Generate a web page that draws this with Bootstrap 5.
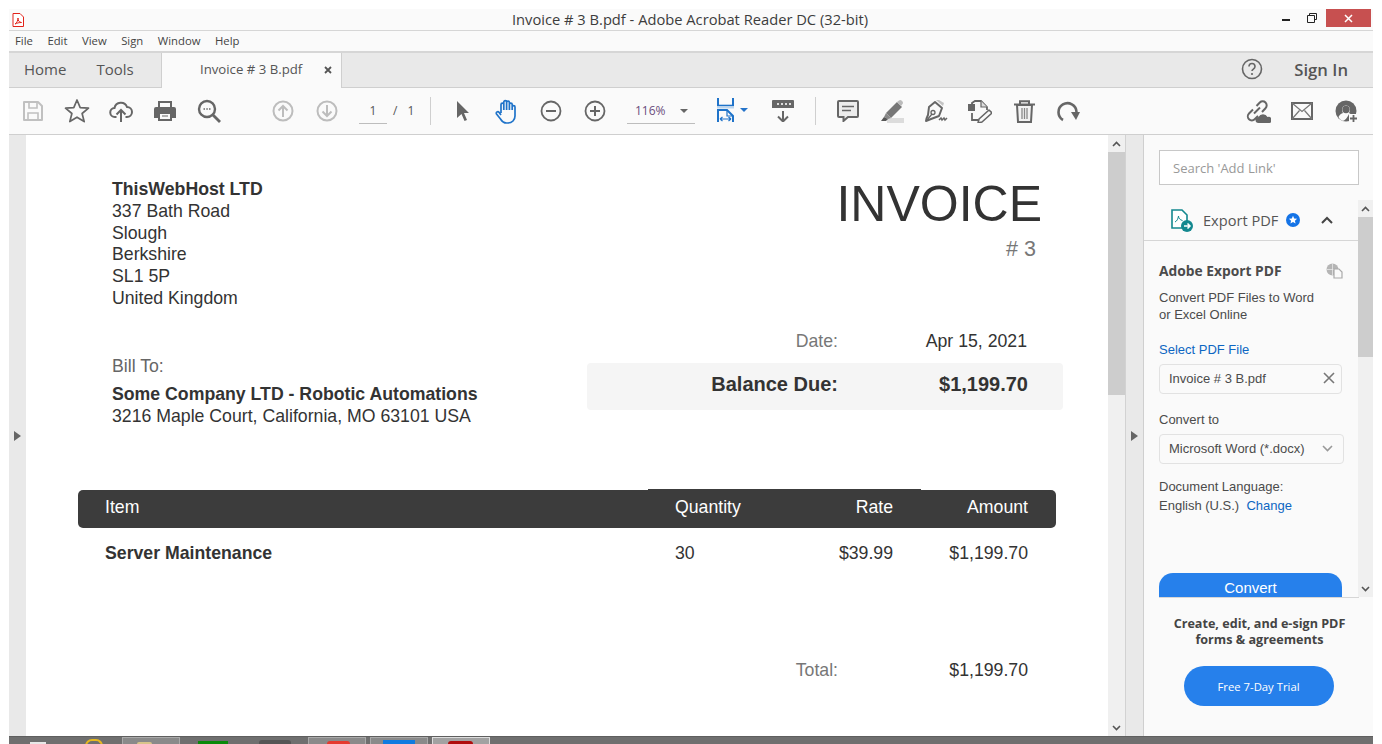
<!DOCTYPE html>
<html lang="en">
<head>
<meta charset="UTF-8" />
<meta name="viewport" content="width=device-width, initial-scale=1" />
<title>Invoice # 3 B.pdf - Adobe Acrobat Reader DC (32-bit)</title>
<link href="https://cdn.jsdelivr.net/npm/bootstrap@5.3.0/dist/css/bootstrap.min.css" rel="stylesheet" />
<style>
  html, body { height: 744px; overflow: hidden; background: #fff; }
  body { padding: 9px 9px 0; font-family: "Open Sans", "Noto Sans", sans-serif; color: #444; }
  svg { display: block; flex: none; }
  .app-window { height: 735px; width: 1364px; }

  .title-bar { height: 22px; background: #fafafa; border-bottom: 1px solid #d6d6d6; font-size: 14.7px; line-height: 20px; color: #3d3d3d; padding-left: 3px; }
  .title-text { flex: 1; text-align: center; padding-left: 74px; }
  .win-min { width: 8px; height: 2px; background: #222; margin: 10px 17px 0 0; }
  .win-max { margin: 4px 9px 0 0; }
  .win-close { width: 45px; height: 18px; background: #c75050; margin-right: 2px; }

  .menu-bar { height: 22px; background: #fafafa; border-bottom: 2px solid #d6d6d6; font-size: 11.3px; line-height: 20px; padding-left: 6px; gap: 14.500px; color: #444; }

  .tab-bar { height: 35px; background: #e9e9e9; border-bottom: 1px solid #cfcfcf; font-size: 15px; color: #555; }
  .tab-home { width: 152px; padding-left: 15px; gap: 30px; padding-bottom: 1px; }
  .tab-doc { width: 181px; height: 35px; background: #fafafa; border: 1px solid #cfcfcf; border-width: 0 1px; font-size: 13.2px; padding-left: 38px; padding-right: 9px; }
  .tab-end { padding-right: 25px; gap: 31px; padding-bottom: 1px; }
  .sign-in { font-weight: 600; font-size: 16.7px; }

  .tool-bar { height: 47px; background: #fafafa; border-bottom: 1px solid #cfcfcf; padding: 0 5px 0 2px; }
  .tool-slot { width: 44px; height: 46px; }
  .tool-gap-a { width: 30px; }
  .tool-gap-b { width: 10px; }
  .page-box { width: 81px; height: 46px; font-size: 12px; color: #555; }
  .page-num { width: 28px; margin-left: 10px; text-align: center; border-bottom: 1px solid #bdbdbd; height: 25px; line-height: 24px; }
  .page-of { margin-left: 6px; word-spacing: 7px; height: 25px; line-height: 24px; }
  .tool-sep { width: 1px; height: 28px; background: #cfcfcf; flex: none; }
  .zoom-box { width: 68px; height: 25px; border-bottom: 1px solid #bdbdbd; font-size: 12px; line-height: 24px; padding-left: 8px; padding-right: 7px; color: #6a4d7c; }
  .drop-arrow { width: 0; height: 0; border-left: 4px solid transparent; border-right: 4px solid transparent; border-top: 4px solid #666; }
  .fit-box { width: 66px; gap: 6px; padding-left: 22px; padding-bottom: 3px; }
  .drop-blue { border-top-color: #2473c9; }
  .tool-push { flex: 1; }

  .work-area { height: 601px; }
  .side-strip { width: 17px; background: #e9e9e9; }
  .strip-arrow { width: 0; height: 0; border-top: 5px solid transparent; border-bottom: 5px solid transparent; border-left: 7px solid #666; }
  .pdf-page { width: 1082px; background: #fff; overflow: hidden; font-family: "Liberation Sans", Arial, sans-serif; color: #333; font-size: 17.7px; line-height: 21.8px; padding: 44px 0 0 52px; }
  .vert-bar { width: 17px; background: #f0f0f0; }
  .bar-arrow { height: 17px; }
  .bar-thumb { height: 243px; background: #cdcdcd; }
  .mid-strip { width: 19px; background: #e9e9e9; border-left: 1px solid #d2d2d2; border-right: 1px solid #cfcfcf; }

  .bill-from { padding-left: 34px; width: 700px; }
  .inv-head { width: 263px; text-align: right; }
  .inv-word { font-size: 50px; line-height: 50px; color: #333; }
  .inv-num { font-size: 21.5px; line-height: 24px; color: #777; padding-right: 6px; margin-top: 8px; }
  .head-row { width: 964px; height: 142px; }
  .bill-row { width: 985px; height: 169px; }
  .bill-to { width: 509px; padding: 35px 0 0 34px; }
  .bill-label { color: #666; margin-bottom: 6px; }
  .sums { width: 476px; }
  .date-row { height: 42px; padding-top: 10px; }
  .sum-label { width: 251px; text-align: right; color: #777; }
  .sum-value { width: 189px; text-align: right; }
  .balance-band { width: 476px; height: 47px; background: #f5f5f5; border-radius: 4px; font-weight: 700; font-size: 20px; line-height: 43px; }
  .balance-band .sum-label { color: #333; }
  .balance-band .sum-value { width: 190px; }

  .item-head { width: 978px; height: 38px; background: #3c3c3c; border-radius: 5px; color: #fff; position: relative; line-height: 35px; }
  .item-head::before { content: ""; position: absolute; left: 570px; width: 273px; top: -1px; height: 1px; background: #3c3c3c; }
  .col-item { width: 597px; padding-left: 27px; }
  .col-qty { width: 130px; }
  .col-rate { width: 88px; text-align: right; }
  .col-amt { width: 135px; text-align: right; }
  .item-row { width: 978px; line-height: 22px; padding-top: 14px; }
  .total-row { width: 950px; margin-top: 96px; }
  .total-row .sum-value { width: 190px; }
  .total-label { width: 760px; text-align: right; color: #777; }

  .right-panel { width: 229px; background: #fafafa; font-family: "Liberation Sans", Arial, sans-serif; font-size: 13px; line-height: 18px; color: #4b4b4b; }
  .find-box { width: 200px; height: 35px; margin: 15px 0 0 15px; background: #fff; border: 1px solid #c8c8c8; font-family: "Open Sans", sans-serif; font-size: 13px; line-height: 34px; padding-left: 13px; color: #999; }
  .panel-scroll { height: 397px; margin-top: 15px; }
  .panel-body { width: 214px; overflow: hidden; }
  .panel-bar { width: 15px; background: #f0f0f0; }
  .panel-arrow { height: 17px; }
  .panel-thumb { height: 140px; background: #cdcdcd; }
  .panel-head { height: 41px; border-bottom: 1px solid #d6d6d6; padding-left: 27px; font-family: "Open Sans", sans-serif; font-size: 14.6px; color: #555; }
  .head-label { margin-left: 9px; }
  .head-chev { margin-left: 21px; }
  .panel-inner { padding: 19px 15px 0; }
  .export-title { font-weight: 700; font-size: 13.8px; font-family: "Open Sans", sans-serif; line-height: 21px; }
  .export-desc { margin-top: 8px; line-height: 17px; }
  .blue-link { color: #0d66c2; text-decoration: none; }
  .select-label { margin-top: 18px; display: block; }
  .file-field, .format-field { height: 30px; background: #fafafa; border: 1px solid #e2e2e2; border-radius: 4px; padding: 0 6px 2px 9px; line-height: 27px; }
  .file-field { width: 183px; margin-top: 5px; }
  .format-field { width: 185px; margin-top: 5px; }
  .convert-label { margin-top: 17px; }
  .lang-block { margin-top: 13px; line-height: 19px; }
  .convert-btn { width: 183px; height: 24px; margin-top: 58px; padding: 0; border: 0; border-radius: 14px 14px 0 0; background: #2680eb; color: #fff; font-size: 15px; line-height: 30px; display: block; overflow: hidden; }
  .promo-box { padding: 18px 15px 0; width: 229px; }
  .promo-line { border-top: 1px solid #d6d6d6; margin: 0 14px 0 15px; }
  .promo-text { font-family: "Open Sans", sans-serif; font-weight: 700; font-size: 12.6px; line-height: 15.500px; text-align: center; color: #444; padding-left: 2px; white-space: nowrap; }
  .trial-btn { width: 150px; height: 40px; margin: 19px auto 0; padding: 0; border: 0; border-radius: 20px; background: #2680eb; color: #fff; font-family: "Open Sans", sans-serif; font-size: 11.3px; line-height: 39px; display: block; }

  .task-bar { height: 8px; background: #6f6f6f; border-top: 1px solid #5f5f5f; overflow: hidden; }
  .task-on { width: 58px; height: 7px; flex: none; background: #8a8a8a; border: 1px solid #aaa; border-bottom: 0; }
  .task-lit { background: #a2a2a2; border-color: #ddd; }
  .task-mark { flex: none; border-radius: 3px 3px 0 0; }
  .mk-start { width: 16px; height: 2px; margin: 5px 0 0 21px; background: #e8e8e8; border-radius: 0; }
  .mk-ie { width: 18px; height: 7px; margin: 2px 0 0 39px; border: 2px solid #e6b820; border-bottom: 0; border-radius: 9px 9px 0 0; }
  .on-first { margin-left: 19px; }
  .on-gap { margin-left: 4px; }
  .mk-folder { width: 15px; height: 2px; margin: 4px 0 0 14px; background: #d8c48a; }
  .mk-green { width: 30px; height: 4px; margin: 4px 0 0 18px; background: #0a8a0a; border-radius: 0; }
  .mk-dark { width: 32px; height: 5px; margin: 3px 0 0 31px; background: #555; }
  .on-red { margin-left: 17px; }
  .mk-red { width: 23px; height: 3px; margin: 3px 0 0 18px; background: #e53a2f; border-radius: 12px 12px 0 0; }
  .mk-blue { width: 32px; height: 5px; margin: 2px 0 0 12px; background: #0f7be0; border-radius: 0; }
  .mk-crim { width: 25px; height: 3px; margin: 3px 0 0 15px; background: #b00d0d; border-radius: 6px 6px 0 0; }
</style>
</head>
<body>
<div class="app-window d-flex flex-column">

  <!-- title bar -->
  <div class="title-bar d-flex">
    <svg class="mt-1" width="12" height="14" viewBox="0 0 12 14"><path d="M1 .5h7l3.500 3.500v9.500H1z" fill="#fff" stroke="#e2231a"/><path d="M3 11c2-1 3-4 3-6 0 3 1 4 3.500 4.500C7 9.500 5 10 3 11z" fill="none" stroke="#e2231a"/></svg>
    <div class="title-text">Invoice # 3 B.pdf - Adobe Acrobat Reader DC (32-bit)</div>
    <div class="d-flex">
      <div class="win-min"></div>
      <svg class="win-max" width="10" height="10" viewBox="0 0 10 10"><path d="M2.500 2.500V.5h7v6H7.500M.5 2.500h7v7h-7z" fill="none" stroke="#222"/></svg>
      <div class="win-close d-flex align-items-center justify-content-center">
        <svg width="9" height="9" viewBox="0 0 9 9"><path d="M1 1l7 7M8 1L1 8" stroke="#fff" stroke-width="1.500"/></svg>
      </div>
    </div>
  </div>

  <!-- menu -->
  <div class="menu-bar d-flex">
    <span>File</span><span>Edit</span><span>View</span><span>Sign</span><span>Window</span><span>Help</span>
  </div>

  <!-- tabs -->
  <div class="tab-bar d-flex align-items-center">
    <div class="tab-home d-flex"><span>Home</span><span>Tools</span></div>
    <div class="tab-doc d-flex align-items-center justify-content-between">
      <span>Invoice # 3 B.pdf</span>
      <svg width="8" height="8" viewBox="0 0 8 8"><path d="M1 1l6 6M7 1L1 7" stroke="#555" stroke-width="1.800"/></svg>
    </div>
    <div class="tab-end ms-auto d-flex align-items-center">
      <svg width="22" height="22" viewBox="0 0 22 22"><circle cx="11" cy="11" r="9.500" fill="none" stroke="#666" stroke-width="1.600"/><path d="M8 8.500c0-4 6-4 6 0 0 2.500-3 2.500-3 4.500" fill="none" stroke="#666" stroke-width="1.600"/><circle cx="11" cy="16" r="1.100" fill="#666"/></svg>
      <span class="sign-in">Sign In</span>
    </div>
  </div>

  <!-- toolbar -->
  <div class="tool-bar d-flex align-items-center">
    <div class="tool-slot d-flex align-items-center justify-content-center">
      <svg width="22" height="22" viewBox="0 0 22 22"><path d="M2 2h14l4 4v14H2z" fill="none" stroke="#c0c0c0" stroke-width="2" stroke-linejoin="round"/><path d="M7 2v6h8V2M6 20v-7h10v7" fill="none" stroke="#c0c0c0" stroke-width="1.600"/></svg>
    </div>
    <div class="tool-slot d-flex align-items-center justify-content-center">
      <svg width="26" height="26" viewBox="0 0 26 26"><path d="M13 2l3.200 7.600 8.300.6-6.400 5.300 2.100 8.100L13 19.200l-7.200 4.400 2.100-8.100-6.400-5.300 8.300-.6z" fill="none" stroke="#666" stroke-width="1.700" stroke-linejoin="round"/></svg>
    </div>
    <div class="tool-slot d-flex align-items-center justify-content-center">
      <svg width="24" height="24" viewBox="0 0 24 24"><path d="M7.500 18H6a4.500 4.500 0 0 1-.5-9A6.500 6.500 0 0 1 18 8a5 5 0 0 1 0 10h-1.500" fill="none" stroke="#666" stroke-width="2"/><path d="M12 23V12M7.500 15.500L12 11l4.500 4.500" fill="none" stroke="#666" stroke-width="2"/></svg>
    </div>
    <div class="tool-slot d-flex align-items-center justify-content-center">
      <svg width="22" height="22" viewBox="0 0 22 22"><path d="M4 7V1h14v6h2a2 2 0 0 1 2 2v9h-4v3H4v-3H0V9a2 2 0 0 1 2-2z" fill="#666"/><path d="M6 3h10v4H6zM6 14h10v5H6z" fill="#fafafa"/><path d="M8 16h6" stroke="#666"/></svg>
    </div>
    <div class="tool-slot d-flex align-items-center justify-content-center">
      <svg width="24" height="24" viewBox="0 0 24 24"><circle cx="10" cy="10" r="8" fill="none" stroke="#666" stroke-width="2.400"/><path d="M16 16l7 7" stroke="#666" stroke-width="2.800"/><path d="M6.500 10h1.500M9.300 10h1.500M12 10h1.500" stroke="#666" stroke-width="1.500"/></svg>
    </div>
    <div class="tool-gap-a"></div>
    <div class="tool-slot d-flex align-items-center justify-content-center">
      <svg width="22" height="22" viewBox="0 0 22 22"><circle cx="11" cy="11" r="9.500" fill="none" stroke="#bdbdbd" stroke-width="2"/><path d="M11 17V6M6.500 10.500L11 6l4.500 4.500" fill="none" stroke="#bdbdbd" stroke-width="2"/></svg>
    </div>
    <div class="tool-slot d-flex align-items-center justify-content-center">
      <svg width="22" height="22" viewBox="0 0 22 22"><circle cx="11" cy="11" r="9.500" fill="none" stroke="#bdbdbd" stroke-width="2"/><path d="M11 5v11M6.500 11.500L11 16l4.500-4.500" fill="none" stroke="#bdbdbd" stroke-width="2"/></svg>
    </div>
    <div class="page-box d-flex align-items-center">
      <div class="page-num">1</div><div class="page-of">/ 1</div>
    </div>
    <div class="tool-sep"></div>
    <div class="tool-gap-b"></div>
    <div class="tool-slot d-flex align-items-center justify-content-center">
      <svg width="14" height="22" viewBox="0 0 14 22"><path d="M1 1l12 12H8l3 7-2.500 1-3-7L1 18z" fill="#666"/></svg>
    </div>
    <div class="tool-slot d-flex align-items-center justify-content-center">
      <svg width="24" height="25" viewBox="0 0 24 25"><path d="M6 14V5.500a1.400 1.400 0 0 1 2.800 0V11M8.800 11V3a1.400 1.400 0 0 1 2.800 0v8M11.600 11V3.500a1.400 1.400 0 0 1 2.800 0V11M14.400 11V5.500a1.400 1.400 0 0 1 2.800 0V11M17.200 11V8a1.400 1.400 0 0 1 2.800 0v9c0 4-3 7-7 7h-1.500c-3 0-4.500-1.500-6-4L1.500 15c-1-2 1.500-3 2.700-1.500L6 16" fill="none" stroke="#1f73c9" stroke-width="1.700" stroke-linejoin="round"/></svg>
    </div>
    <div class="tool-slot d-flex align-items-center justify-content-center">
      <svg width="22" height="22" viewBox="0 0 22 22"><circle cx="11" cy="11" r="9.500" fill="none" stroke="#666" stroke-width="1.800"/><path d="M6 11h10" stroke="#666" stroke-width="2"/></svg>
    </div>
    <div class="tool-slot d-flex align-items-center justify-content-center">
      <svg width="22" height="22" viewBox="0 0 22 22"><circle cx="11" cy="11" r="9.500" fill="none" stroke="#666" stroke-width="1.800"/><path d="M6 11h10M11 6v10" stroke="#666" stroke-width="2"/></svg>
    </div>
    <div class="tool-gap-b"></div>
    <div class="zoom-box d-flex align-items-center justify-content-between">
      <span>116%</span><span class="drop-arrow"></span>
    </div>
    <div class="fit-box d-flex align-items-center">
      <svg width="17" height="24" viewBox="0 0 17 24"><path d="M1 0v8M16 0v8" stroke="#1f73c9" stroke-width="2"/><path d="M0 7.500h17" stroke="#1f73c9" stroke-width="1.600"/><path d="M0 9h17v1.500H0z" fill="#bcd6ef"/><path d="M1 24V12h9l6 6v6" fill="none" stroke="#1f73c9" stroke-width="2"/><path d="M10 12v6h6" fill="none" stroke="#1f73c9" stroke-width="1.200"/><path d="M3 21h11M3 21l2.500-2M3 21l2.500 2M14 21l-2.500-2M14 21l-2.500 2" fill="none" stroke="#1f73c9" stroke-width="1.200"/></svg>
      <span class="drop-arrow drop-blue"></span>
    </div>
    <div class="tool-slot d-flex align-items-center justify-content-center">
      <svg width="22" height="22" viewBox="0 0 22 22"><path d="M1 0h20a1 1 0 0 1 1 1v7h-22V1a1 1 0 0 1 1-1z" fill="#666"/><path d="M5 3h2v2H5zM9 3h2v2H9zM13 3h2v2h-2zM17 3h2v2h-2z" fill="#ddd"/><path d="M11 11v10M6 16.500l5 5 5-5" fill="none" stroke="#666" stroke-width="2"/></svg>
    </div>
    <div class="tool-gap-b"></div>
    <div class="tool-sep"></div>
    <div class="tool-gap-b"></div>
    <div class="tool-slot d-flex align-items-center justify-content-center">
      <svg width="22" height="22" viewBox="0 0 22 22"><path d="M2 1h18a1 1 0 0 1 1 1v14a1 1 0 0 1-1 1h-9l-4.500 4v-4H2a1 1 0 0 1-1-1V2a1 1 0 0 1 1-1z" fill="#ececec" stroke="#666" stroke-width="2"/><path d="M5 6.500h12M5 10.500h9" stroke="#666" stroke-width="1.300"/></svg>
    </div>
    <div class="tool-slot d-flex align-items-center justify-content-center">
      <svg width="23" height="23" viewBox="0 0 23 23"><path d="M6 18h17v5H6z" fill="#dcdcdc"/><path d="M5 13L16 2l5 5-11 11z" fill="#777"/><path d="M16 2l2-1.500a2 2 0 0 1 2.500 0l1 1a2 2 0 0 1 0 2.500L20 6z" fill="#bbb"/><path d="M5 13l-2 4 4 2 3-1z" fill="#888"/><path d="M3 17l-3 4h5l2-2z" fill="#555"/></svg>
    </div>
    <div class="tool-slot d-flex align-items-center justify-content-center">
      <svg width="24" height="23" viewBox="0 0 24 23"><path d="M11 2l7 6-3 8-8 3-5 2c0-2 1-4 2-6l1-8z" fill="#fafafa" stroke="#666" stroke-width="2" stroke-linejoin="round"/><path d="M12 0l7 6 1-3-5-3z" fill="#c4c4c4"/><path d="M3 20l5-6" stroke="#666" stroke-width="1.300"/><circle cx="9" cy="12.500" r="2" fill="none" stroke="#666" stroke-width="1.300"/><path d="M15 20l2-2 1 2 2-2 1 2 2-2" fill="none" stroke="#666" stroke-width="1.500"/></svg>
    </div>
    <div class="tool-slot d-flex align-items-center justify-content-center">
      <svg width="24" height="23" viewBox="0 0 24 23"><path d="M4 4V3l3-2h6l6 6v3M4 13v7h6" fill="none" stroke="#666" stroke-width="1.800"/><path d="M0 4h7v7H0z" fill="#666"/><path d="M13 1v6h6" fill="#ddd" stroke="#666" stroke-width="1.200"/><path d="M21 10l3 3-10 9-4 1 1-4z" fill="#fafafa" stroke="#666" stroke-width="1.600" stroke-linejoin="round"/></svg>
    </div>
    <div class="tool-slot d-flex align-items-center justify-content-center">
      <svg width="21" height="23" viewBox="0 0 21 23"><path d="M0 4.500h21M6 4V1.200h9V4" fill="none" stroke="#666" stroke-width="2"/><path d="M3 5l1 17h13l1-17z" fill="#f2f2f2" stroke="#666" stroke-width="2"/><path d="M8 8v11M10.500 8v11M13 8v11" stroke="#888" stroke-width="1.300"/></svg>
    </div>
    <div class="tool-slot d-flex align-items-center justify-content-center">
      <svg width="23" height="21" viewBox="0 0 23 21"><path d="M6 19A9 9 0 1 1 19.500 11" fill="none" stroke="#666" stroke-width="2.600"/><path d="M14 11h9l-4 8z" fill="#666"/></svg>
    </div>
    <div class="tool-push"></div>
    <div class="tool-slot d-flex align-items-center justify-content-center">
      <svg width="25" height="23" viewBox="0 0 25 23"><path d="M8 13.500L14 7.500" stroke="#666" stroke-width="2"/><path d="M7 9.500l-4 4a4 4 0 0 0 5.700 5.700l3.300-3.300M10.500 6l3.300-3.500a4 4 0 0 1 5.700 5.700L16 12" fill="none" stroke="#666" stroke-width="2"/><path d="M12.500 23a3 3 0 0 1 0-6 5 5 0 0 1 9 0 3 3 0 0 1 2 6z" fill="#666"/></svg>
    </div>
    <div class="tool-slot d-flex align-items-center justify-content-center">
      <svg width="22" height="18" viewBox="0 0 22 18"><path d="M1 1h20v16H1z" fill="none" stroke="#666" stroke-width="2"/><path d="M1 1l10 8.500L21 1M1 17l7.500-8.500M21 17l-7.500-8.500" fill="none" stroke="#777" stroke-width="1.200"/></svg>
    </div>
    <div class="tool-slot d-flex align-items-center justify-content-center">
      <svg width="23" height="23" viewBox="0 0 23 23"><circle cx="11" cy="11" r="10.500" fill="#666"/><path d="M3.500 17c1-2.500 3-3.500 4.500-4-2-3-1-7.500 3-7.500s5 4.500 3 7.500l3 2-2.500 6H8c-2-.5-3.500-2-4.500-4z" fill="#fafafa"/><circle cx="11" cy="9.500" r="3.700" fill="#666"/><path d="M14 14c1 0 2 .500 3 1l-2 6H7c3 0 5-3 7-7z" fill="#666"/><path d="M14 14h9v9h-9z" fill="#fafafa"/><path d="M18.500 15v7M15 18.500h7" stroke="#666" stroke-width="1.800"/></svg>
    </div>
  </div>

  <!-- document + panels -->
  <div class="work-area d-flex">
    <div class="side-strip d-flex align-items-center justify-content-center"><span class="strip-arrow"></span></div>

    <div class="pdf-page">
      <div class="head-row d-flex justify-content-between">
        <div class="bill-from">
          <div class="fw-bold">ThisWebHost LTD</div>
          <div>337 Bath Road</div>
          <div>Slough</div>
          <div>Berkshire</div>
          <div>SL1 5P</div>
          <div>United Kingdom</div>
        </div>
        <div class="inv-head">
          <div class="inv-word">INVOICE</div>
          <div class="inv-num"># 3</div>
        </div>
      </div>
      <div class="bill-row d-flex">
        <div class="bill-to">
          <div class="bill-label">Bill To:</div>
          <div class="fw-bold">Some Company LTD - Robotic Automations</div>
          <div>3216 Maple Court, California, MO 63101 USA</div>
        </div>
        <div class="sums">
          <div class="date-row d-flex"><div class="sum-label">Date:</div><div class="sum-value">Apr 15, 2021</div></div>
          <div class="balance-band d-flex"><div class="sum-label">Balance Due:</div><div class="sum-value">$1,199.70</div></div>
        </div>
      </div>
      <div class="item-head d-flex">
        <div class="col-item">Item</div><div class="col-qty">Quantity</div><div class="col-rate">Rate</div><div class="col-amt">Amount</div>
      </div>
      <div class="item-row d-flex">
        <div class="col-item fw-bold">Server Maintenance</div><div class="col-qty">30</div><div class="col-rate">$39.99</div><div class="col-amt">$1,199.70</div>
      </div>
      <div class="total-row d-flex"><div class="total-label">Total:</div><div class="sum-value">$1,199.70</div></div>
    </div>

    <div class="vert-bar d-flex flex-column">
      <div class="bar-arrow d-flex align-items-center justify-content-center"><svg width="9" height="6" viewBox="0 0 9 6"><path d="M1 5l3.500-3.500L8 5" fill="none" stroke="#555" stroke-width="1.600"/></svg></div>
      <div class="bar-thumb"></div>
      <div class="bar-arrow mt-auto d-flex align-items-center justify-content-center"><svg width="9" height="6" viewBox="0 0 9 6"><path d="M1 1l3.500 3.500L8 1" fill="none" stroke="#555" stroke-width="1.600"/></svg></div>
    </div>
    <div class="mid-strip d-flex align-items-center justify-content-center"><span class="strip-arrow"></span></div>

    <div class="right-panel">
      <div class="find-box">Search 'Add Link'</div>
      <div class="panel-scroll d-flex">
        <div class="panel-body">
          <div class="panel-head d-flex align-items-center">
            <svg width="23" height="23" viewBox="0 0 23 23"><path d="M1 1h10l5 5v13H1z" fill="#fff" stroke="#13888f" stroke-width="1.600"/><path d="M4 13c2-1 3-3 3.500-6 0 2 1.500 4 4 4.500" fill="none" stroke="#13888f"/><circle cx="16" cy="17" r="6" fill="#13888f"/><path d="M13 17h6M16.500 14.500L19 17l-2.500 2.500" fill="none" stroke="#fff" stroke-width="1.500"/></svg>
            <span class="head-label">Export PDF</span>
            <svg class="ms-2" width="14" height="14" viewBox="0 0 14 14"><circle cx="7" cy="7" r="7" fill="#1473e6"/><path d="M7 2.800l1.200 2.700 2.900.3-2.200 1.900.7 2.900L7 9.100l-2.600 1.500.7-2.900-2.200-1.900 2.900-.3z" fill="#fff"/></svg>
            <svg class="head-chev" width="12" height="8" viewBox="0 0 12 8"><path d="M1 7l5-5 5 5" fill="none" stroke="#444" stroke-width="2"/></svg>
          </div>
          <div class="panel-inner">
            <div class="d-flex justify-content-between align-items-center">
              <span class="export-title">Adobe Export PDF</span>
              <svg width="17" height="16" viewBox="0 0 17 16"><circle cx="6.500" cy="6.500" r="6" fill="#b5b5b5"/><path d="M6.500 .5v12M.5 6.500h12" stroke="#eee" stroke-width=".7"/><path d="M8 6h5l3 3v6H8z" fill="#fafafa" stroke="#aaa" stroke-width="1.200"/></svg>
            </div>
            <div class="export-desc">Convert PDF Files to Word<br />or Excel Online</div>
            <a class="blue-link select-label" href="#">Select PDF File</a>
            <div class="file-field d-flex justify-content-between align-items-center">
              <span>Invoice # 3 B.pdf</span>
              <svg width="12" height="12" viewBox="0 0 12 12"><path d="M1 1l10 10M11 1L1 11" stroke="#777" stroke-width="1.600"/></svg>
            </div>
            <div class="convert-label">Convert to</div>
            <div class="format-field d-flex justify-content-between align-items-center">
              <span>Microsoft Word (*.docx)</span>
              <svg class="me-1" width="11" height="7" viewBox="0 0 11 7"><path d="M1 1l4.500 4.500L10 1" fill="none" stroke="#999" stroke-width="1.600"/></svg>
            </div>
            <div class="lang-block">Document Language:<br />English (U.S.)&nbsp; <a class="blue-link" href="#">Change</a></div>
            <button class="convert-btn" type="button">Convert</button>
          </div>
        </div>
        <div class="panel-bar d-flex flex-column">
          <div class="panel-arrow d-flex align-items-center justify-content-center"><svg width="9" height="6" viewBox="0 0 9 6"><path d="M1 5l3.500-3.500L8 5" fill="none" stroke="#555" stroke-width="1.600"/></svg></div>
          <div class="panel-thumb"></div>
          <div class="panel-arrow mt-auto d-flex align-items-center justify-content-center"><svg width="9" height="6" viewBox="0 0 9 6"><path d="M1 1l3.500 3.500L8 1" fill="none" stroke="#555" stroke-width="1.600"/></svg></div>
        </div>
      </div>
      <div class="promo-line"></div>
      <div class="promo-box">
        <div class="promo-text">Create, edit, and e-sign PDF<br />forms &amp; agreements</div>
        <button class="trial-btn" type="button">Free 7-Day Trial</button>
      </div>
    </div>
  </div>

  <!-- taskbar strip, only its top edge is on screen -->
  <div class="task-bar d-flex">
    <div class="task-mark mk-start"></div>
    <div class="task-mark mk-ie"></div>
    <div class="task-on on-first"><div class="task-mark mk-folder"></div></div>
    <div class="task-mark mk-green"></div>
    <div class="task-mark mk-dark"></div>
    <div class="task-on on-red"><div class="task-mark mk-red"></div></div>
    <div class="task-on on-gap"><div class="task-mark mk-blue"></div></div>
    <div class="task-on task-lit on-gap"><div class="task-mark mk-crim"></div></div>
  </div>
</div>
<script src="https://cdn.jsdelivr.net/npm/bootstrap@5.3.0/dist/js/bootstrap.bundle.min.js"></script>
</body>
</html>
